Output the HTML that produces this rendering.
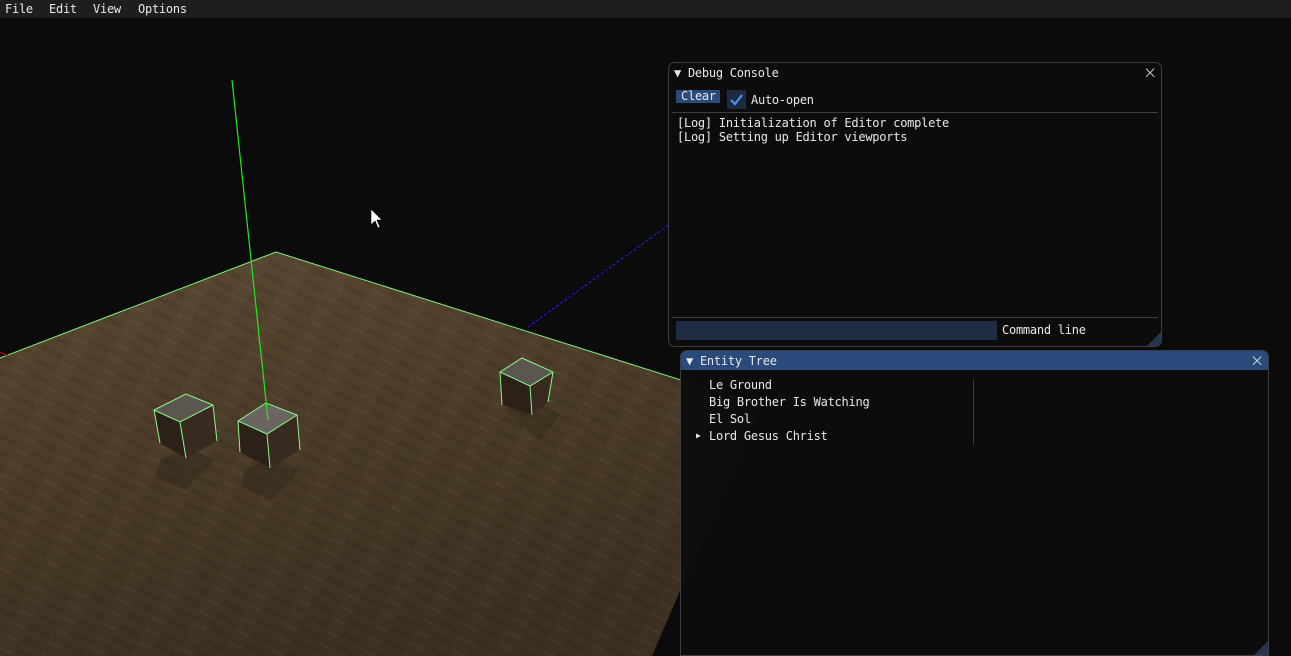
<!DOCTYPE html>
<html><head><meta charset="utf-8"><style>
html,body{margin:0;padding:0;width:1291px;height:656px;overflow:hidden;background:#0b0b0b;font-family:"DejaVu Sans Mono","Liberation Mono",monospace;font-size:12px;letter-spacing:-0.25px;color:#e8e8e8}
#menu{position:absolute;left:0;top:0;width:1291px;height:18px;background:#1e1e1e}
#menu span{position:absolute;top:2px}
.win{position:absolute;background:rgba(13,13,13,0.96);border:1px solid #3d3d45;border-radius:7px;box-sizing:border-box;overflow:hidden}
.tb{position:absolute;left:0;top:0;right:0;height:19px}
.t{position:absolute;white-space:pre;line-height:14px}
.x{position:absolute;right:4px;top:0px;font-size:17px;font-family:"DejaVu Sans",sans-serif;font-weight:300}
.grip{position:absolute;right:0;bottom:0;width:0;height:0;border-left:14px solid transparent;border-bottom:14px solid #26354d}
</style></head><body>
<svg width="1291" height="656" style="position:absolute;left:0;top:0">
<defs>
<pattern id="wood" width="40" height="14" patternUnits="userSpaceOnUse" patternTransform="rotate(28)">
<rect width="40" height="14" fill="#000" opacity="0"/>
<rect x="0" y="4" width="22" height="5" fill="#000" opacity=".08"/>
<rect x="24" y="10" width="14" height="3" fill="#fff" opacity=".03"/>
</pattern>
<linearGradient id="fl" x1="0" y1="0" x2="0.3" y2="1"><stop offset="0" stop-color="#5a4832"/><stop offset="1" stop-color="#3d3021"/></linearGradient>
</defs>
<polygon points="276,252 760,405 652,656 0,656 0,358" fill="url(#fl)"/>
<polygon points="276,252 760,405 652,656 0,656 0,358" fill="url(#wood)"/>
<polyline points="0,358 276,252 760,405" fill="none" stroke="#7cf07c" stroke-width="1"/>
<line x1="0" y1="352" x2="8" y2="356" stroke="#d00" />
<line x1="528" y1="327" x2="670" y2="224" stroke="#2020ff" stroke-dasharray="3,2"/>
<polygon points="160,460 190,448 215,460 185,490 155,478" fill="#2a2015" opacity=".35"/>
<polygon points="244,470 272,456 300,470 272,500 242,486" fill="#2a2015" opacity=".35"/>
<polygon points="505,410 532,400 560,415 540,440" fill="#2a2015" opacity=".3"/>
<polygon points="154,410 180,422 186,458 160,443" fill="#2b2119"/>
<polygon points="180,422 213,405 217,441 186,458" fill="#382a1f"/>
<polygon points="154,410 186,394 213,405 180,422" fill="#5c5650"/>
<polyline points="160,443 154,410 186,394 213,405 217,441" fill="none" stroke="#8cf58c"/>
<polyline points="154,410 180,422 213,405" fill="none" stroke="#8cf58c"/>
<line x1="180" y1="422" x2="186" y2="458" stroke="#8cf58c"/>
<polygon points="238,421 267,434 270,468 240,452" fill="#2b2119"/>
<polygon points="267,434 297,415 300,450 270,468" fill="#382a1f"/>
<polygon points="238,421 266,403 297,415 267,434" fill="#6a6560"/>
<polyline points="240,452 238,421 266,403 297,415 300,450" fill="none" stroke="#8cf58c"/>
<polyline points="238,421 267,434 297,415" fill="none" stroke="#8cf58c"/>
<line x1="267" y1="434" x2="270" y2="468" stroke="#8cf58c"/>
<polygon points="500,372 530,386 532,415 502,405" fill="#2b2119"/>
<polygon points="530,386 553,372 548,402 532,415" fill="#382a1f"/>
<polygon points="500,372 522,358 553,372 530,386" fill="#5c5650"/>
<polyline points="502,405 500,372 522,358 553,372 548,402" fill="none" stroke="#8cf58c"/>
<polyline points="500,372 530,386 553,372" fill="none" stroke="#8cf58c"/>
<line x1="530" y1="386" x2="532" y2="415" stroke="#8cf58c"/>
<line x1="232" y1="80" x2="268" y2="420" stroke="#22e822" stroke-width="1.2"/>
<polygon points="371,209 371,225 375,221 378,228 380,227 377,220 382,220" fill="#fff" stroke="#000" stroke-width=".6"/>
</svg>
<div id="menu"><span style="left:5px">File</span><span style="left:49px">Edit</span><span style="left:93px">View</span><span style="left:138px">Options</span></div>

<div class="win" style="left:668px;top:62px;width:494px;height:285px">
<div class="tb"><span class="t" style="left:5px;top:3px">▼ Debug Console</span><span class="x">×</span></div>
<div style="position:absolute;left:7px;top:27px;width:44px;height:13px;background:#294a7a"></div>
<span class="t" style="left:12px;top:26px">Clear</span>
<div style="position:absolute;left:58px;top:27px;width:19px;height:19px;background:#1d2b40"></div>
<svg style="position:absolute;left:58px;top:27px" width="19" height="19"><polyline points="4,10 8,14 15,5" fill="none" stroke="#4296fa" stroke-width="2.2"/></svg>
<span class="t" style="left:82px;top:30px">Auto-open</span>
<div style="position:absolute;left:3px;right:3px;top:49px;height:1px;background:#3d3d45"></div>
<span class="t" style="left:8px;top:53px">[Log] Initialization of Editor complete
[Log] Setting up Editor viewports</span>
<div style="position:absolute;left:3px;right:3px;top:254px;height:1px;background:#3d3d45"></div>
<div style="position:absolute;left:7px;top:258px;width:321px;height:19px;background:#1f2d44"></div>
<span class="t" style="left:333px;top:260px">Command line</span>
<div class="grip"></div>
</div>

<div class="win" style="left:680px;top:350px;width:589px;height:306px;border-bottom-left-radius:0;border-bottom-right-radius:0">
<div class="tb" style="background:#294a7a"><span class="t" style="left:5px;top:3px">▼ Entity Tree</span><span class="x">×</span></div>
<span class="t" style="left:28px;top:26px;line-height:17px">Le Ground
Big Brother Is Watching
El Sol
Lord Gesus Christ</span>
<span class="t" style="left:15px;top:78px;font-size:8px">▶</span>
<div style="position:absolute;left:292px;top:28px;width:1px;height:66px;background:#3d3d45"></div>
<div class="grip"></div>
</div>
</body></html>
